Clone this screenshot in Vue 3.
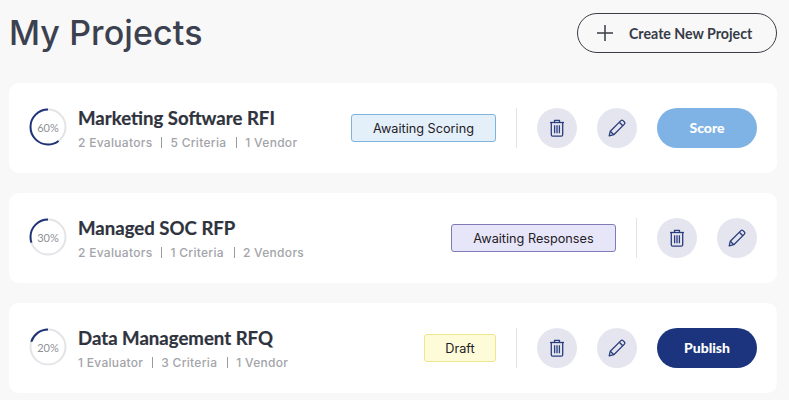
<script setup>
const projects = [
  { name: 'Marketing Software RFI', pct: 60, meta: ['2 Evaluators', '5 Criteria', '1 Vendor'], status: 'Awaiting Scoring', kind: 'scoring', action: 'Score', statusWidth: 145 },
  { name: 'Managed SOC RFP', pct: 30, meta: ['2 Evaluators', '1 Criteria', '2 Vendors'], status: 'Awaiting Responses', kind: 'responses', action: null, statusWidth: 165 },
  { name: 'Data Management RFQ', pct: 20, meta: ['1 Evaluator', '3 Criteria', '1 Vendor'], status: 'Draft', kind: 'draft', action: 'Publish', statusWidth: 72 },
]

const radius = 17.5
const circumference = 2 * Math.PI * radius

// every arc starts at twelve o'clock and runs counter-clockwise
function dash(pct) {
  return `${(circumference * pct) / 100} ${circumference}`
}
</script>

<template>
  <div class="page">
    <header class="head">
      <h1>My Projects</h1>
      <button class="create">
        <svg width="18" height="18" viewBox="0 0 18 18" fill="none" stroke="#3a3d46" stroke-width="1.5">
          <path d="M9 1v16M1 9h16" />
        </svg>
        <span>Create New Project</span>
      </button>
    </header>

    <section v-for="p in projects" :key="p.name" class="card">
      <div class="ring">
        <svg width="38" height="38" viewBox="0 0 38 38" fill="none">
          <circle cx="19" cy="19" :r="radius" stroke="#e3e4e8" stroke-width="2" />
          <circle
            cx="19"
            cy="19"
            :r="radius"
            stroke="#1f3476"
            stroke-width="2"
            :stroke-dasharray="dash(p.pct)"
            transform="rotate(-90 19 19) scale(1 -1) translate(0 -38)"
          />
        </svg>
        <span class="pct">{{ p.pct }}%</span>
      </div>

      <div class="info">
        <h2>{{ p.name }}</h2>
        <p class="meta">
          <span>{{ p.meta[0] }}</span>
          <i class="pipe first"></i>
          <span>{{ p.meta[1] }}</span>
          <i class="pipe"></i>
          <span>{{ p.meta[2] }}</span>
        </p>
      </div>

      <div class="status" :class="p.kind" :style="{ width: p.statusWidth + 'px' }">{{ p.status }}</div>
      <div class="sep"></div>

      <button class="round" aria-label="Delete">
        <svg width="16" height="18" viewBox="0 0 16 18" fill="none" stroke="#2a3d7c" stroke-width="1.3" stroke-linejoin="round">
          <path d="M1 3.500h14" />
          <path d="M5.500 3.200V1.400h5v1.800" />
          <path d="M2.300 3.500v12.200c0 .9.6 1.500 1.500 1.500h8.400c.9 0 1.500-.6 1.500-1.500V3.500" />
          <path d="M5.600 6.200v8M8 6.200v8M10.400 6.200v8" />
        </svg>
      </button>
      <button class="round" aria-label="Edit">
        <svg width="18" height="18" viewBox="0 0 18 18" fill="none" stroke="#2a3d7c" stroke-width="1.3" stroke-linejoin="round">
          <path d="M1.200 16.800l1.100-4.600L12.900 1.600c.6-.6 1.500-.6 2.100 0l1.400 1.400c.6.6.6 1.500 0 2.100L5.800 15.700z" />
          <path d="M2.300 12.200l3.500 3.500M11.300 3.200l3.500 3.500" />
        </svg>
      </button>
      <button v-if="p.action" class="action" :class="p.action.toLowerCase()">{{ p.action }}</button>
    </section>
  </div>
</template>

<style>
html, body {
  margin: 0;
  background: #f8f8f8;
}
</style>

<style scoped>
.page {
  width: 789px;
  height: 400px;
  box-sizing: border-box;
  padding: 13px 12px 0 9px;
  overflow: hidden;
  font-family: Inter, "Liberation Sans", sans-serif;
}

.head {
  display: flex;
  align-items: center;
  justify-content: space-between;
  height: 40px;
  margin-bottom: 30px;
}

h1 {
  margin: -2px 0 0;
  font-family: Inter, sans-serif;
  font-size: 34px;
  font-weight: 500;
  letter-spacing: 0.1px;
  color: #3c4150;
}

.create {
  display: flex;
  align-items: center;
  gap: 16px;
  width: 200px;
  height: 40px;
  box-sizing: border-box;
  padding: 0 0 0 18px;
  background: transparent;
  border: 1px solid #3a3d46;
  border-radius: 20px;
  font-family: Lato, sans-serif;
  font-size: 14.200px;
  font-weight: 700;
  color: #363b47;
}

.create span {
  margin-left: -1px;
}

.card {
  display: flex;
  align-items: center;
  height: 90px;
  box-sizing: border-box;
  padding: 0 20px;
  margin-bottom: 20px;
  background: #fff;
  border-radius: 10px;
}

.ring {
  position: relative;
  flex: none;
  width: 38px;
  height: 38px;
  margin: -2px 11px 0 0;
}

.ring svg {
  display: block;
}

.pct {
  position: absolute;
  inset: 0;
  display: flex;
  align-items: center;
  justify-content: center;
  font-family: Lato, sans-serif;
  font-size: 11px;
  color: #8f9096;
}

.info {
  flex: 1;
  min-width: 0;
}

h2 {
  margin: 0 0 5px;
  font-family: Lato, sans-serif;
  font-size: 18.600px;
  line-height: 24px;
  font-weight: 700;
  color: #2f333d;
  -webkit-text-stroke: 0.2px #2f333d;
}

.meta {
  display: flex;
  align-items: center;
  margin: 0;
  font-size: 12px;
  line-height: 16px;
  font-weight: 500;
  letter-spacing: 0.3px;
  color: #a3a4a9;
}

.pipe {
  width: 1px;
  height: 11px;
  margin: 0 8px 0 9px;
  background: #9a9ba0;
}

.pipe:not(.first) {
  margin: 0 8px 0 10px;
}

.status {
  flex: none;
  height: 28px;
  box-sizing: border-box;
  border-radius: 3px;
  border: 1px solid;
  font-size: 12.700px;
  line-height: 27px;
  text-align: center;
  color: #1f2026;
}

.status.scoring {
  background: #e3f0fa;
  border-color: #7fb3d9;
}

.status.responses {
  background: #e7e6f8;
  border-color: #7f7bb8;
}

.status.draft {
  background: #fefbd8;
  border-color: #f2e68c;
}

.sep {
  flex: none;
  width: 1px;
  height: 40px;
  margin: 0 20px;
  background: #e2e2e4;
}

.round {
  flex: none;
  display: flex;
  align-items: center;
  justify-content: center;
  width: 40px;
  height: 40px;
  padding: 0;
  margin-right: 20px;
  border: 0;
  border-radius: 50%;
  background: #e4e5ef;
}

.round:last-child {
  margin-right: 0;
}

.action {
  flex: none;
  width: 100px;
  height: 40px;
  padding: 0 0 2px;
  border: 0;
  border-radius: 20px;
  font-family: Lato, sans-serif;
  font-size: 14px;
  font-weight: 900;
  color: #fff;
}

.score {
  background: #7fb2e5;
}

.publish {
  background: #1c347e;
}
</style>
